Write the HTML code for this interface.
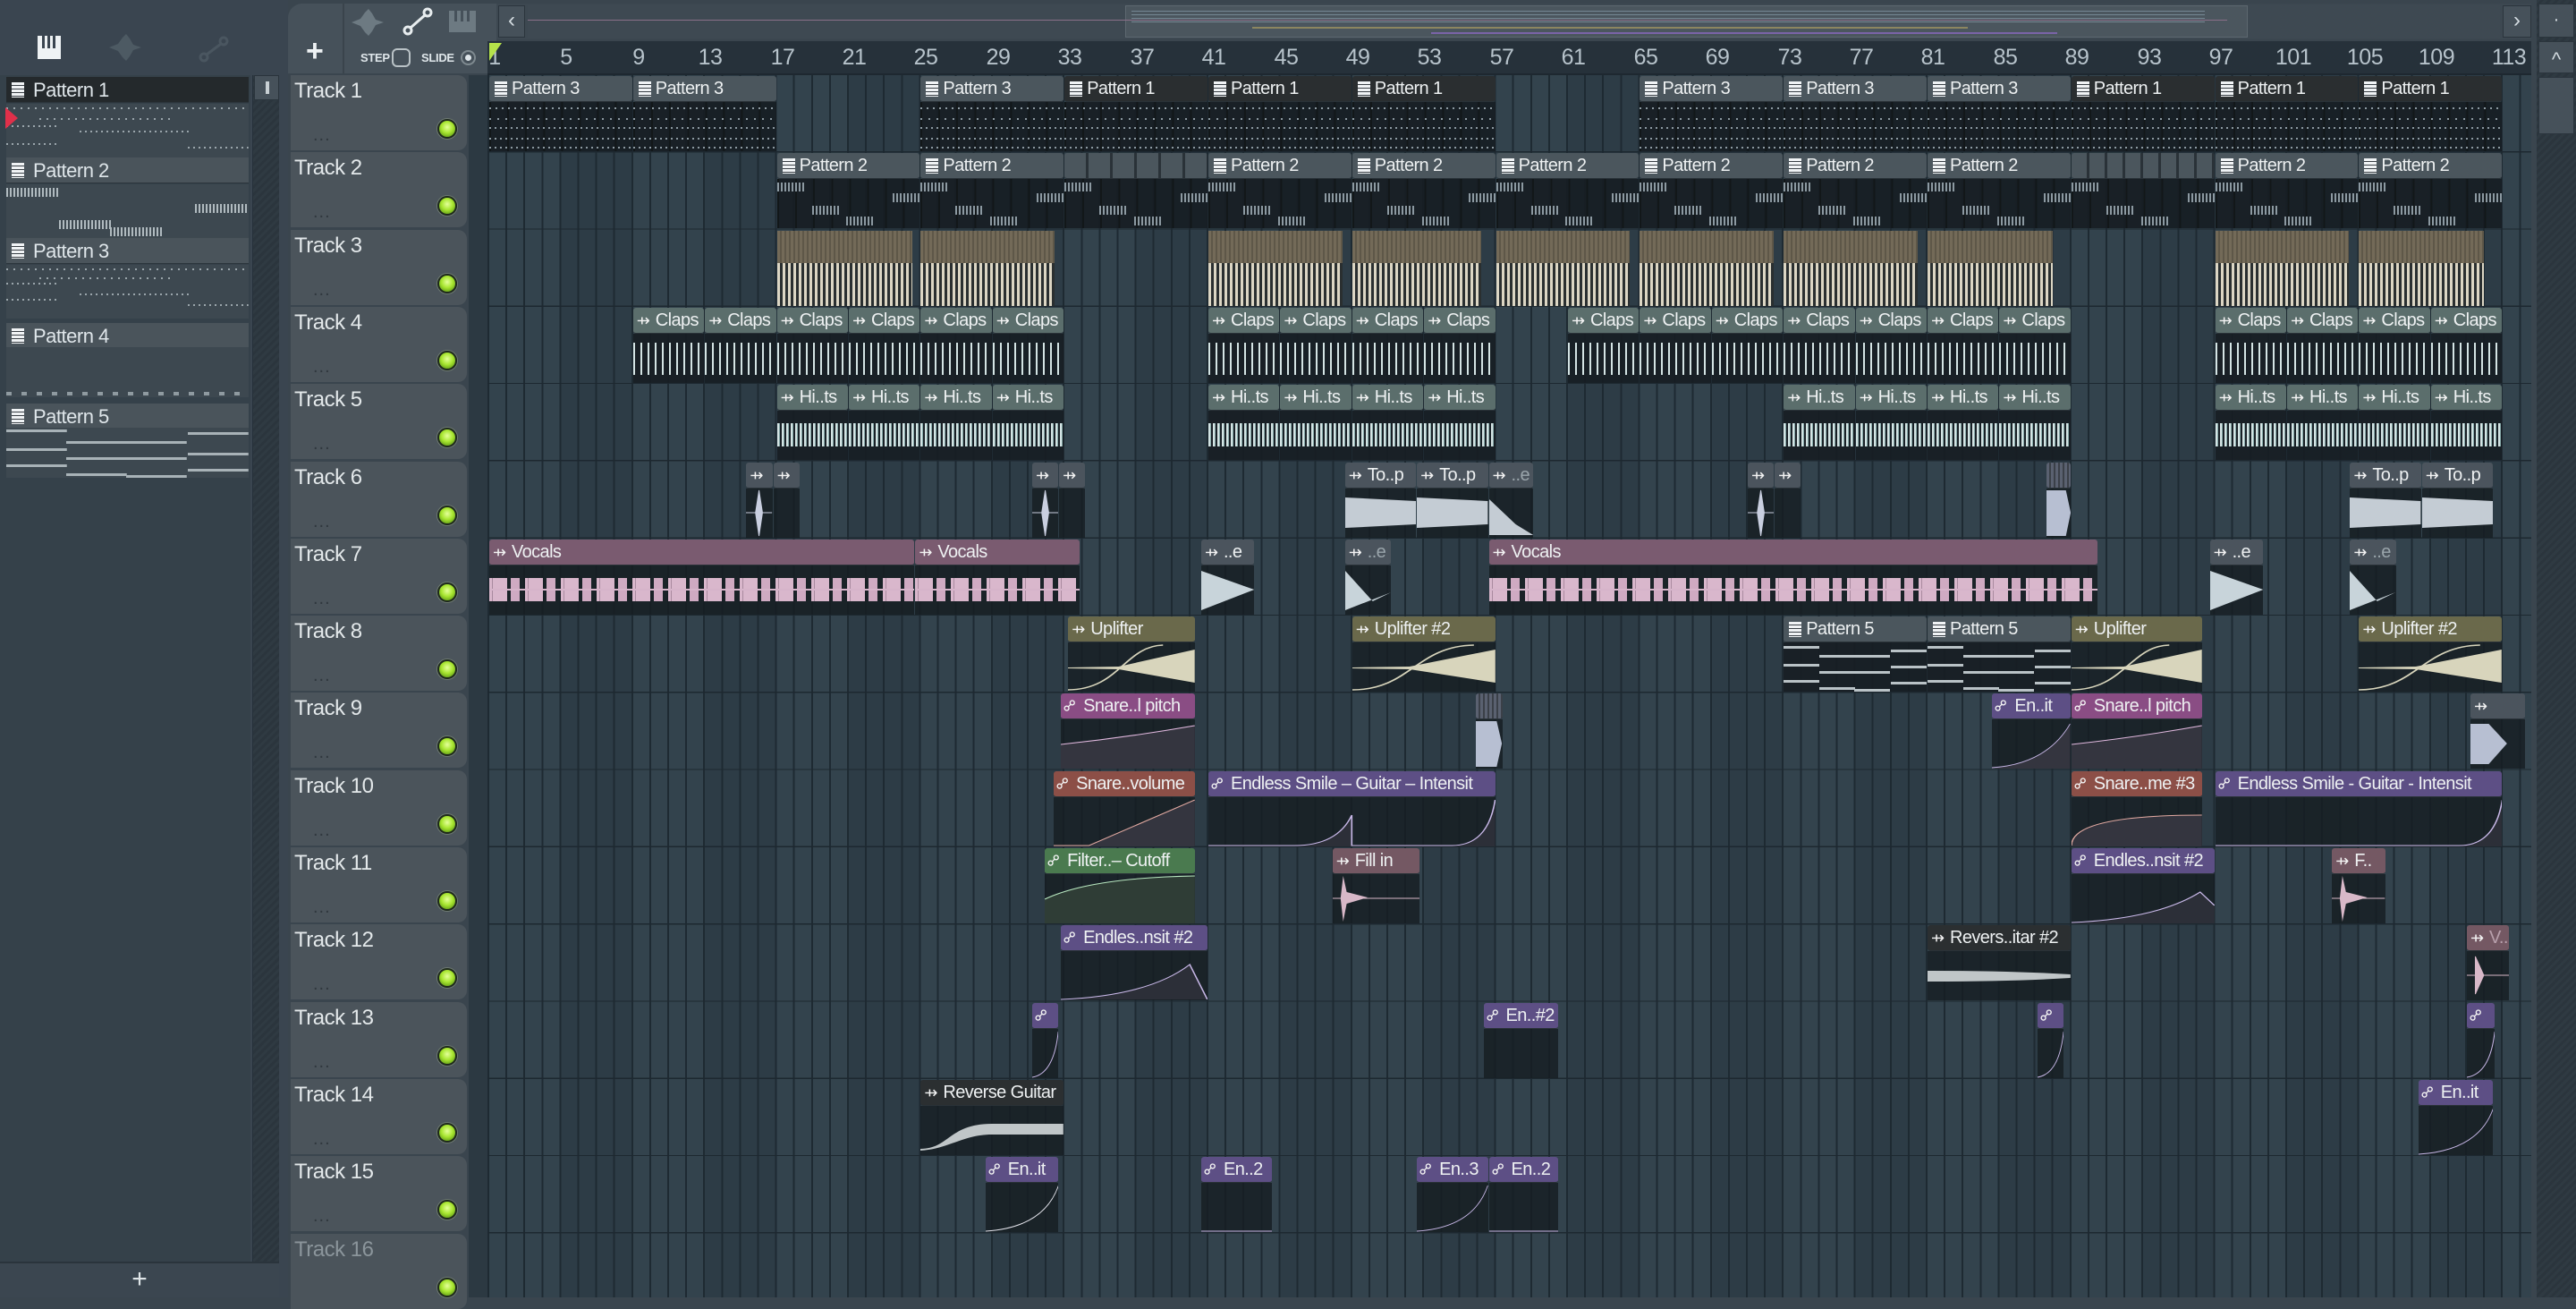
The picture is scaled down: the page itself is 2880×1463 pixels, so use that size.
<!DOCTYPE html>
<html><head><meta charset="utf-8">
<style>
*{box-sizing:border-box;margin:0;padding:0}
body{width:2880px;height:1450px;overflow:hidden;background:#3a454e;font-family:"Liberation Sans Narrow","Liberation Sans",sans-serif;position:relative}
.abs{position:absolute}
#lp{left:0;top:0;width:322px;height:1450px;background:#3a4550}
#lpl{left:0;top:84px;width:280px;height:1326px;background:#35414a}
#lps{left:282px;top:84px;width:30px;height:1326px;background:repeating-linear-gradient(135deg,#2f3a42 0 3px,#2b353d 3px 6px);border-left:1px solid #26313a}
#lpb{left:0;top:1410px;width:312px;height:40px;background:#3b4650;border-top:2px solid #2a343c;color:#dfe5e8;font-size:30px;text-align:center;line-height:36px}
.pt{position:absolute;left:7px;width:271px;height:29px;background:#4a545b;border-bottom:1px solid #2c353c;color:#dfe6ea;font-size:22px;letter-spacing:-0.5px;line-height:29px;padding-left:30px}
.pt.sel{background:#24292c}
.pt::before,.h.pi::before{content:"";position:absolute;left:6px;top:6px;width:14px;height:17px;background:repeating-linear-gradient(180deg,#f0f3f5 0 3px,#3a4046 3px 4px)}
.pp{position:absolute;left:7px;width:271px;height:60px;background:#3d4850}
#th{left:322px;top:84px;width:202px;height:1366px;background:#3a454e}
.tr{position:absolute;left:3px;width:197px;height:84px;background:#4b545b;border-radius:0 10px 10px 0;color:#e3e8ea;font-size:24px;letter-spacing:-0.5px;padding:4px 0 0 4px}
.tr i{position:absolute;left:25px;top:56px;font-style:normal;color:#30383e;font-size:20px;letter-spacing:1px}
.tr b{position:absolute;left:164px;top:49px;width:22px;height:22px;border-radius:50%;background:radial-gradient(circle at 50% 40%,#e4ff9a 0,#a8e630 45%,#6aa51a 80%);border:2px solid #1f2a1c;box-shadow:0 0 0 1px #6e7a72}
#strip{left:524px;top:84px;width:21px;height:1366px;background:#2c3942}
#grid{left:545px;top:84px;width:2285px;height:1366px;
background:
repeating-linear-gradient(180deg,transparent 0 85px,#1d2830 85px 86.3px),
repeating-linear-gradient(90deg,#1e2a32 0 2px,transparent 2px 20.1px),
repeating-linear-gradient(90deg,#33434d 0 80.4px,#2d3c46 80.4px 160.8px)}
#ruler{left:545px;top:46px;width:2285px;height:38px;background:#26313a;border-bottom:2px solid #1e2830}
#ruler span{position:absolute;top:4px;color:#b7c3cb;font-size:25px;letter-spacing:-0.5px;transform:translateX(-50%)}
#tb{left:322px;top:4px;width:233px;height:78px;background:#46515a;border-radius:16px 0 0 0}
#ov{left:555px;top:4px;width:2275px;height:40px;background:#3d4851}
#vs{left:2836px;top:0;width:44px;height:1450px;background:repeating-linear-gradient(135deg,#2f3a42 0 3px,#2b353d 3px 6px)}
.btn{position:absolute;background:#46515a;border:1px solid #2b353d;color:#d5dde2;text-align:center}
.c{position:absolute;left:calc(547px + (var(--a) - 1) * 20.1px);width:calc((var(--b) - var(--a)) * 20.1px - 1px);top:calc(85px + (var(--t) - 1) * 86.3px);height:84px}
.h{position:relative;height:29px;border-radius:3px;color:#eef1f2;font-size:20px;letter-spacing:-0.6px;line-height:29px;white-space:nowrap;overflow:hidden;padding-left:25px;background:#4b565d;border-bottom:1px solid #2a3238}
.h.pi{padding-left:25px}
.h.au::before{content:"⇸";position:absolute;left:4px;top:0;font-family:"DejaVu Sans",sans-serif;font-size:18px;color:#f3f3f3}
.h.at::before{content:"⚯";position:absolute;left:3px;top:0;font-family:"DejaVu Sans",sans-serif;font-size:18px;color:#f3f3f3;transform:rotate(-45deg)}
.h.ni{padding-left:4px}
.bd{position:absolute;top:29px;left:0;right:0;bottom:0;background:rgba(22,29,34,.82);overflow:hidden}
.bd svg{position:absolute;left:0;top:0;width:100%;height:100%}
.p3 .bd{background:
repeating-linear-gradient(90deg,#8c99a1 0 2px,transparent 2px 7px) 0 6px/100% 2px no-repeat,
repeating-linear-gradient(90deg,#8c99a1 0 2px,transparent 2px 9px) 0 18px/100% 2px no-repeat,
repeating-linear-gradient(90deg,#8c99a1 0 2px,transparent 2px 6px) 0 28px/100% 2px no-repeat,
repeating-linear-gradient(90deg,#8c99a1 0 2px,transparent 2px 6px) 0 40px/100% 2px no-repeat,
repeating-linear-gradient(90deg,#8c99a1 0 2px,transparent 2px 6px) 0 50px/100% 2px no-repeat,
repeating-linear-gradient(90deg,#121719 0 2px,transparent 2px 20.1px),rgba(22,29,34,.9)}
.p1 .h{background:#2a2e30}
.p2 .bd{background:
repeating-linear-gradient(90deg,#8c99a1 0 2px,transparent 2px 4px) 0 4px/30px 10px no-repeat,
repeating-linear-gradient(90deg,#8c99a1 0 2px,transparent 2px 4px) 100% 16px/30px 10px no-repeat,
repeating-linear-gradient(90deg,#8c99a1 0 2px,transparent 2px 4px) 30% 30px/30px 10px no-repeat,
repeating-linear-gradient(90deg,#8c99a1 0 2px,transparent 2px 4px) 60% 42px/30px 10px no-repeat,
repeating-linear-gradient(90deg,#121719 0 2px,transparent 2px 20.1px),rgba(22,29,34,.9)}
.kk .top{position:absolute;left:0;right:0;top:0;height:36px;background:repeating-linear-gradient(90deg,#736a58 0 3px,#5e5748 3px 5px)}
.kk .bd{top:36px;background:repeating-linear-gradient(90deg,#dcd6c4 0 3px,#2a2f30 3px 6px)}
.cl .h{background:#5b6e6c}
.cl .bd{background:repeating-linear-gradient(90deg,#d4e4e4 0 2px,transparent 2px 8px) 0 10px/100% 36px no-repeat,rgba(22,29,34,.9)}
.hi .h{background:#5b6e6c}
.hi .bd{background:repeating-linear-gradient(90deg,#d4e4e4 0 2px,#8aa 2px 3px,transparent 3px 5px) 0 14px/100% 26px no-repeat,rgba(22,29,34,.9)}
.sm .h{background:#4b545d}
.vo .h{background:#7a5b70}
.vo .bd{background:linear-gradient(#d6b4ca,#d6b4ca) 0 26px/100% 2px no-repeat,repeating-linear-gradient(90deg,#d9b7cc 0 3px,#a98a9f 3px 4px,#d9b7cc 4px 20px,transparent 20px 24px,#cfaac2 24px 34px,transparent 34px 40px) 0 14px/100% 26px no-repeat,rgba(22,29,34,.85)}
.up .h{background:#6a694b}
.pa .h{background:#8a4d84}
.sv .h{background:#8c4f47}
.en .h{background:#5d4f85}
.fi .h{background:#4a7a4f}
.fl .h{background:#745863}
.dk .h{background:#2b2f31}
.p5 .bd{background:
linear-gradient(#b9c2c6,#b9c2c6) 0 4px/25% 3px no-repeat,linear-gradient(#b9c2c6,#b9c2c6) 0 24px/25% 3px no-repeat,linear-gradient(#b9c2c6,#b9c2c6) 0 42px/25% 3px no-repeat,
linear-gradient(#b9c2c6,#b9c2c6) 33% 14px/25% 3px no-repeat,linear-gradient(#b9c2c6,#b9c2c6) 33% 32px/25% 3px no-repeat,linear-gradient(#b9c2c6,#b9c2c6) 33% 50px/25% 3px no-repeat,
linear-gradient(#b9c2c6,#b9c2c6) 66% 14px/25% 3px no-repeat,linear-gradient(#b9c2c6,#b9c2c6) 66% 32px/25% 3px no-repeat,linear-gradient(#b9c2c6,#b9c2c6) 66% 52px/25% 3px no-repeat,
linear-gradient(#b9c2c6,#b9c2c6) 100% 8px/25% 3px no-repeat,linear-gradient(#b9c2c6,#b9c2c6) 100% 26px/25% 3px no-repeat,linear-gradient(#b9c2c6,#b9c2c6) 100% 44px/25% 3px no-repeat,rgba(22,29,34,.9)}
</style></head><body>

<div id="lp" class="abs"></div>
<div class="abs" style="left:42px;top:40px;width:26px;height:26px;background:#eef2f4"><div style="position:absolute;left:5px;top:0;width:3px;height:14px;background:#3a4550"></div><div style="position:absolute;left:11px;top:0;width:3px;height:14px;background:#3a4550"></div><div style="position:absolute;left:17px;top:0;width:3px;height:14px;background:#3a4550"></div></div>
<svg class="abs" style="left:122px;top:38px" width="44" height="30" viewBox="0 0 44 30"><path d="M0 15 L10 11 L15 4 L19 0 L23 5 L27 12 L36 15 L27 18 L23 25 L19 30 L15 26 L10 19Z" fill="#4d5a63"/></svg>
<svg class="abs" style="left:222px;top:40px" width="34" height="30" viewBox="0 0 34 30"><circle cx="6" cy="24" r="4" fill="none" stroke="#4a5660" stroke-width="3"/><circle cx="28" cy="6" r="4" fill="none" stroke="#4a5660" stroke-width="3"/><path d="M9 21L25 9" stroke="#4a5660" stroke-width="3"/></svg>
<div id="lpl" class="abs"></div>
<div id="lps" class="abs"><div style="position:absolute;left:1px;top:0;width:28px;height:28px;background:#46515a;border:1px solid #2a343c"><div style="position:absolute;left:12px;top:6px;width:4px;height:14px;background:#c8d0d4"></div></div></div>

<div class="pt sel" style="top:86px">Pattern 1</div>
<div class="pp" style="top:116px;background:
repeating-linear-gradient(90deg,#9aa5ab 0 2px,transparent 2px 8px) 0 4px/100% 2px no-repeat,
repeating-linear-gradient(90deg,#9aa5ab 0 2px,transparent 2px 8px) 30% 16px/55% 2px no-repeat,
repeating-linear-gradient(90deg,#9aa5ab 0 2px,transparent 2px 6px) 0 24px/22% 2px no-repeat,
repeating-linear-gradient(90deg,#9aa5ab 0 2px,transparent 2px 6px) 55% 30px/45% 2px no-repeat,
repeating-linear-gradient(90deg,#9aa5ab 0 2px,transparent 2px 6px) 0 44px/22% 2px no-repeat,
repeating-linear-gradient(90deg,#9aa5ab 0 2px,transparent 2px 6px) 100% 48px/25% 2px no-repeat,#3d4850"></div>
<div class="abs" style="left:6px;top:120px;width:0;height:0;border-top:12px solid transparent;border-bottom:12px solid transparent;border-left:14px solid #e0304a"></div>
<div class="pt" style="top:176px">Pattern 2</div>
<div class="pp" style="top:206px;background:
repeating-linear-gradient(90deg,#b0babf 0 2px,transparent 2px 4px) 0 4px/22% 10px no-repeat,
repeating-linear-gradient(90deg,#b0babf 0 2px,transparent 2px 4px) 100% 22px/22% 10px no-repeat,
repeating-linear-gradient(90deg,#b0babf 0 2px,transparent 2px 4px) 28% 40px/22% 10px no-repeat,
repeating-linear-gradient(90deg,#b0babf 0 2px,transparent 2px 4px) 55% 48px/22% 10px no-repeat,#3d4850"></div>
<div class="pt" style="top:266px">Pattern 3</div>
<div class="pp" style="top:296px;background:
repeating-linear-gradient(90deg,#9aa5ab 0 2px,transparent 2px 8px) 0 4px/100% 2px no-repeat,
repeating-linear-gradient(90deg,#9aa5ab 0 2px,transparent 2px 8px) 30% 14px/55% 2px no-repeat,
repeating-linear-gradient(90deg,#9aa5ab 0 2px,transparent 2px 6px) 0 20px/22% 2px no-repeat,
repeating-linear-gradient(90deg,#9aa5ab 0 2px,transparent 2px 6px) 55% 32px/45% 2px no-repeat,
repeating-linear-gradient(90deg,#9aa5ab 0 2px,transparent 2px 6px) 0 38px/22% 2px no-repeat,
repeating-linear-gradient(90deg,#9aa5ab 0 2px,transparent 2px 6px) 100% 44px/25% 2px no-repeat,#3d4850"></div>
<div class="pt" style="top:361px">Pattern 4</div>
<div class="pp" style="top:388px;height:56px;background:repeating-linear-gradient(90deg,#8f9aa0 0 6px,transparent 6px 17px) 0 50px/100% 4px no-repeat,#3d4850"></div>
<div class="pt" style="top:451px">Pattern 5</div>
<div class="pp" style="top:478px;height:56px;background:
linear-gradient(#a8b2b7,#a8b2b7) 0 2px/25% 3px no-repeat,linear-gradient(#a8b2b7,#a8b2b7) 0 23px/25% 3px no-repeat,linear-gradient(#a8b2b7,#a8b2b7) 0 41px/25% 3px no-repeat,
linear-gradient(#a8b2b7,#a8b2b7) 33% 15px/25% 3px no-repeat,linear-gradient(#a8b2b7,#a8b2b7) 33% 33px/25% 3px no-repeat,linear-gradient(#a8b2b7,#a8b2b7) 33% 51px/25% 3px no-repeat,
linear-gradient(#a8b2b7,#a8b2b7) 66% 15px/25% 3px no-repeat,linear-gradient(#a8b2b7,#a8b2b7) 66% 33px/25% 3px no-repeat,linear-gradient(#a8b2b7,#a8b2b7) 66% 53px/25% 3px no-repeat,
linear-gradient(#a8b2b7,#a8b2b7) 100% 5px/25% 3px no-repeat,linear-gradient(#a8b2b7,#a8b2b7) 100% 28px/25% 3px no-repeat,linear-gradient(#a8b2b7,#a8b2b7) 100% 46px/25% 3px no-repeat,#3d4850"></div>
<div id="lpb" class="abs">+</div>

<!-- toolbar -->
<div id="tb" class="abs"></div>
<div class="abs" style="left:342px;top:38px;color:#eef2f4;font-size:34px;font-family:'Liberation Sans',sans-serif;font-weight:bold">+</div>
<div class="abs" style="left:383px;top:4px;width:2px;height:78px;background:#3a444c"></div>
<svg class="abs" style="left:393px;top:10px" width="44" height="30" viewBox="0 0 44 30"><path d="M0 15 L10 11 L15 4 L19 0 L23 5 L27 12 L36 15 L27 18 L23 25 L19 30 L15 26 L10 19Z" fill="#6d7a82"/></svg>
<svg class="abs" style="left:450px;top:8px" width="34" height="32" viewBox="0 0 34 32"><circle cx="6" cy="26" r="4" fill="none" stroke="#e8edef" stroke-width="3"/><circle cx="28" cy="6" r="4" fill="none" stroke="#e8edef" stroke-width="3"/><path d="M9 23L25 9" stroke="#e8edef" stroke-width="3"/></svg>
<div class="abs" style="left:502px;top:12px;width:30px;height:24px;background:#6d7a82"><div style="position:absolute;left:6px;top:0;width:3px;height:12px;background:#46515a"></div><div style="position:absolute;left:13px;top:0;width:3px;height:12px;background:#46515a"></div><div style="position:absolute;left:20px;top:0;width:3px;height:12px;background:#46515a"></div></div>
<div class="abs" style="left:403px;top:57px;color:#dfe6ea;font-size:13px;font-weight:bold;letter-spacing:-0.3px">STEP</div>
<div class="abs" style="left:438px;top:54px;width:21px;height:21px;border:2px solid #b9c2c6;border-radius:6px"></div>
<div class="abs" style="left:471px;top:57px;color:#dfe6ea;font-size:13px;font-weight:bold;letter-spacing:-0.3px">SLIDE</div>
<div class="abs" style="left:515px;top:56px;width:17px;height:17px;border:2px solid #7f8a90;border-radius:50%"><div style="position:absolute;left:3px;top:3px;width:7px;height:7px;border-radius:50%;background:#dfe6ea"></div></div>

<!-- overview -->
<div id="ov" class="abs"></div>
<div class="btn" style="left:557px;top:6px;width:30px;height:36px;font-size:24px;line-height:32px">‹</div>
<div class="abs" style="left:590px;top:6px;width:2205px;height:36px;background:#3e4952"></div>
<div class="abs" style="left:1258px;top:6px;width:1255px;height:36px;background:#4b565e;border:1px solid #5d6870"></div>
<div class="abs" style="left:590px;top:22px;width:1900px;height:1px;background:#8a6f88"></div>
<div class="abs" style="left:1265px;top:12px;width:1200px;height:14px;background:repeating-linear-gradient(180deg,#7f93a0 0 1px,transparent 1px 4px);opacity:.8"></div>
<div class="abs" style="left:1400px;top:30px;width:800px;height:2px;background:#8c8660"></div>
<div class="abs" style="left:1600px;top:36px;width:700px;height:2px;background:#7a64a8"></div>
<div class="btn" style="left:2798px;top:6px;width:32px;height:36px;font-size:24px;line-height:32px">›</div>

<!-- ruler -->
<div id="ruler" class="abs">
<span style="left:8px">1</span><span style="left:88px">5</span><span style="left:169px">9</span><span style="left:249px">13</span><span style="left:330px">17</span><span style="left:410px">21</span><span style="left:490px">25</span><span style="left:571px">29</span><span style="left:651px">33</span><span style="left:732px">37</span><span style="left:812px">41</span><span style="left:893px">45</span><span style="left:973px">49</span><span style="left:1053px">53</span><span style="left:1134px">57</span><span style="left:1214px">61</span><span style="left:1295px">65</span><span style="left:1375px">69</span><span style="left:1456px">73</span><span style="left:1536px">77</span><span style="left:1616px">81</span><span style="left:1697px">85</span><span style="left:1777px">89</span><span style="left:1858px">93</span><span style="left:1938px">97</span><span style="left:2019px">101</span><span style="left:2099px">105</span><span style="left:2179px">109</span><span style="left:2260px">113</span>
</div>
<div class="abs" style="left:547px;top:48px;width:0;height:0;border-left:14px solid #b6e34a;border-bottom:20px solid transparent"></div>

<!-- right scroll -->
<div id="vs" class="abs"></div>
<div class="btn" style="left:2838px;top:4px;width:40px;height:38px;font-size:20px;line-height:34px">·</div>
<div class="btn" style="left:2838px;top:46px;width:40px;height:36px;font-size:22px;line-height:40px">^</div>
<div class="btn" style="left:2838px;top:86px;width:40px;height:64px"></div>

<!-- track headers -->
<div id="th" class="abs">
<div class="tr" style="top:0">Track 1<i>...</i><b></b></div>
<div class="tr" style="top:86.3px">Track 2<i>...</i><b></b></div>
<div class="tr" style="top:172.6px">Track 3<i>...</i><b></b></div>
<div class="tr" style="top:258.9px">Track 4<i>...</i><b></b></div>
<div class="tr" style="top:345.2px">Track 5<i>...</i><b></b></div>
<div class="tr" style="top:431.5px">Track 6<i>...</i><b></b></div>
<div class="tr" style="top:517.8px">Track 7<i>...</i><b></b></div>
<div class="tr" style="top:604.1px">Track 8<i>...</i><b></b></div>
<div class="tr" style="top:690.4px">Track 9<i>...</i><b></b></div>
<div class="tr" style="top:776.7px">Track 10<i>...</i><b></b></div>
<div class="tr" style="top:863px">Track 11<i>...</i><b></b></div>
<div class="tr" style="top:949.3px">Track 12<i>...</i><b></b></div>
<div class="tr" style="top:1035.6px">Track 13<i>...</i><b></b></div>
<div class="tr" style="top:1121.9px">Track 14<i>...</i><b></b></div>
<div class="tr" style="top:1208.2px">Track 15<i>...</i><b></b></div>
<div class="tr" style="top:1294.5px;color:#8b959b">Track 16<b></b></div>
</div>
<div id="strip" class="abs"></div>
<div id="grid" class="abs"></div>

<!-- Track 1 -->
<div class="c p3" style="--t:1;--a:1;--b:9"><div class="h pi">Pattern 3</div><div class="bd"></div></div>
<div class="c p3" style="--t:1;--a:9;--b:17"><div class="h pi">Pattern 3</div><div class="bd"></div></div>
<div class="c p3" style="--t:1;--a:25;--b:33"><div class="h pi">Pattern 3</div><div class="bd"></div></div>
<div class="c p3 p1" style="--t:1;--a:33;--b:41"><div class="h pi">Pattern 1</div><div class="bd"></div></div>
<div class="c p3 p1" style="--t:1;--a:41;--b:49"><div class="h pi">Pattern 1</div><div class="bd"></div></div>
<div class="c p3 p1" style="--t:1;--a:49;--b:57"><div class="h pi">Pattern 1</div><div class="bd"></div></div>
<div class="c p3" style="--t:1;--a:65;--b:73"><div class="h pi">Pattern 3</div><div class="bd"></div></div>
<div class="c p3" style="--t:1;--a:73;--b:81"><div class="h pi">Pattern 3</div><div class="bd"></div></div>
<div class="c p3" style="--t:1;--a:81;--b:89"><div class="h pi">Pattern 3</div><div class="bd"></div></div>
<div class="c p3 p1" style="--t:1;--a:89;--b:97"><div class="h pi">Pattern 1</div><div class="bd"></div></div>
<div class="c p3 p1" style="--t:1;--a:97;--b:105"><div class="h pi">Pattern 1</div><div class="bd"></div></div>
<div class="c p3 p1" style="--t:1;--a:105;--b:113"><div class="h pi">Pattern 1</div><div class="bd"></div></div>

<!-- Track 2 -->
<div class="c p2" style="--t:2;--a:17;--b:25"><div class="h pi">Pattern 2</div><div class="bd"></div></div>
<div class="c p2" style="--t:2;--a:25;--b:33"><div class="h pi">Pattern 2</div><div class="bd"></div></div>
<div class="c p2" style="--t:2;--a:33;--b:41"><div class="h" style="padding:0;background:repeating-linear-gradient(90deg,#4b565d 0 24px,#2a3238 24px 27px)"></div><div class="bd"></div></div>
<div class="c p2" style="--t:2;--a:41;--b:49"><div class="h pi">Pattern 2</div><div class="bd"></div></div>
<div class="c p2" style="--t:2;--a:49;--b:57"><div class="h pi">Pattern 2</div><div class="bd"></div></div>
<div class="c p2" style="--t:2;--a:57;--b:65"><div class="h pi">Pattern 2</div><div class="bd"></div></div>
<div class="c p2" style="--t:2;--a:65;--b:73"><div class="h pi">Pattern 2</div><div class="bd"></div></div>
<div class="c p2" style="--t:2;--a:73;--b:81"><div class="h pi">Pattern 2</div><div class="bd"></div></div>
<div class="c p2" style="--t:2;--a:81;--b:89"><div class="h pi">Pattern 2</div><div class="bd"></div></div>
<div class="c p2" style="--t:2;--a:89;--b:97"><div class="h" style="padding:0;background:repeating-linear-gradient(90deg,#4b565d 0 17px,#2a3238 17px 20px)"></div><div class="bd"></div></div>
<div class="c p2" style="--t:2;--a:97;--b:105"><div class="h pi">Pattern 2</div><div class="bd"></div></div>
<div class="c p2" style="--t:2;--a:105;--b:113"><div class="h pi">Pattern 2</div><div class="bd"></div></div>

<!-- Track 3 -->
<div class="c kk" style="--t:3;--a:17;--b:24.6"><div class="top"></div><div class="bd"></div></div>
<div class="c kk" style="--t:3;--a:25;--b:32.5"><div class="top"></div><div class="bd"></div></div>
<div class="c kk" style="--t:3;--a:41;--b:48.5"><div class="top"></div><div class="bd"></div></div>
<div class="c kk" style="--t:3;--a:49;--b:56.2"><div class="top"></div><div class="bd"></div></div>
<div class="c kk" style="--t:3;--a:57;--b:64.5"><div class="top"></div><div class="bd"></div></div>
<div class="c kk" style="--t:3;--a:65;--b:72.5"><div class="top"></div><div class="bd"></div></div>
<div class="c kk" style="--t:3;--a:73;--b:80.5"><div class="top"></div><div class="bd"></div></div>
<div class="c kk" style="--t:3;--a:81;--b:88"><div class="top"></div><div class="bd"></div></div>
<div class="c kk" style="--t:3;--a:97;--b:104.5"><div class="top"></div><div class="bd"></div></div>
<div class="c kk" style="--t:3;--a:105;--b:112"><div class="top"></div><div class="bd"></div></div>

<!-- Track 4 -->
<div class="c cl" style="--t:4;--a:9;--b:13"><div class="h au">Claps</div><div class="bd"></div></div>
<div class="c cl" style="--t:4;--a:13;--b:17"><div class="h au">Claps</div><div class="bd"></div></div>
<div class="c cl" style="--t:4;--a:17;--b:21"><div class="h au">Claps</div><div class="bd"></div></div>
<div class="c cl" style="--t:4;--a:21;--b:25"><div class="h au">Claps</div><div class="bd"></div></div>
<div class="c cl" style="--t:4;--a:25;--b:29"><div class="h au">Claps</div><div class="bd"></div></div>
<div class="c cl" style="--t:4;--a:29;--b:33"><div class="h au">Claps</div><div class="bd"></div></div>
<div class="c cl" style="--t:4;--a:41;--b:45"><div class="h au">Claps</div><div class="bd"></div></div>
<div class="c cl" style="--t:4;--a:45;--b:49"><div class="h au">Claps</div><div class="bd"></div></div>
<div class="c cl" style="--t:4;--a:49;--b:53"><div class="h au">Claps</div><div class="bd"></div></div>
<div class="c cl" style="--t:4;--a:53;--b:57"><div class="h au">Claps</div><div class="bd"></div></div>
<div class="c cl" style="--t:4;--a:61;--b:65"><div class="h au">Claps</div><div class="bd"></div></div>
<div class="c cl" style="--t:4;--a:65;--b:69"><div class="h au">Claps</div><div class="bd"></div></div>
<div class="c cl" style="--t:4;--a:69;--b:73"><div class="h au">Claps</div><div class="bd"></div></div>
<div class="c cl" style="--t:4;--a:73;--b:77"><div class="h au">Claps</div><div class="bd"></div></div>
<div class="c cl" style="--t:4;--a:77;--b:81"><div class="h au">Claps</div><div class="bd"></div></div>
<div class="c cl" style="--t:4;--a:81;--b:85"><div class="h au">Claps</div><div class="bd"></div></div>
<div class="c cl" style="--t:4;--a:85;--b:89"><div class="h au">Claps</div><div class="bd"></div></div>
<div class="c cl" style="--t:4;--a:97;--b:101"><div class="h au">Claps</div><div class="bd"></div></div>
<div class="c cl" style="--t:4;--a:101;--b:105"><div class="h au">Claps</div><div class="bd"></div></div>
<div class="c cl" style="--t:4;--a:105;--b:109"><div class="h au">Claps</div><div class="bd"></div></div>
<div class="c cl" style="--t:4;--a:109;--b:113"><div class="h au">Claps</div><div class="bd"></div></div>

<!-- Track 5 -->
<div class="c hi" style="--t:5;--a:17;--b:21"><div class="h au">Hi..ts</div><div class="bd"></div></div>
<div class="c hi" style="--t:5;--a:21;--b:25"><div class="h au">Hi..ts</div><div class="bd"></div></div>
<div class="c hi" style="--t:5;--a:25;--b:29"><div class="h au">Hi..ts</div><div class="bd"></div></div>
<div class="c hi" style="--t:5;--a:29;--b:33"><div class="h au">Hi..ts</div><div class="bd"></div></div>
<div class="c hi" style="--t:5;--a:41;--b:45"><div class="h au">Hi..ts</div><div class="bd"></div></div>
<div class="c hi" style="--t:5;--a:45;--b:49"><div class="h au">Hi..ts</div><div class="bd"></div></div>
<div class="c hi" style="--t:5;--a:49;--b:53"><div class="h au">Hi..ts</div><div class="bd"></div></div>
<div class="c hi" style="--t:5;--a:53;--b:57"><div class="h au">Hi..ts</div><div class="bd"></div></div>
<div class="c hi" style="--t:5;--a:73;--b:77"><div class="h au">Hi..ts</div><div class="bd"></div></div>
<div class="c hi" style="--t:5;--a:77;--b:81"><div class="h au">Hi..ts</div><div class="bd"></div></div>
<div class="c hi" style="--t:5;--a:81;--b:85"><div class="h au">Hi..ts</div><div class="bd"></div></div>
<div class="c hi" style="--t:5;--a:85;--b:89"><div class="h au">Hi..ts</div><div class="bd"></div></div>
<div class="c hi" style="--t:5;--a:97;--b:101"><div class="h au">Hi..ts</div><div class="bd"></div></div>
<div class="c hi" style="--t:5;--a:101;--b:105"><div class="h au">Hi..ts</div><div class="bd"></div></div>
<div class="c hi" style="--t:5;--a:105;--b:109"><div class="h au">Hi..ts</div><div class="bd"></div></div>
<div class="c hi" style="--t:5;--a:109;--b:113"><div class="h au">Hi..ts</div><div class="bd"></div></div>

<!-- Track 6 -->
<div class="c sm" style="--t:6;--a:15.3;--b:16.8"><div class="h au"></div><div class="bd"><svg viewBox="0 0 30 55" preserveAspectRatio="none"><path d="M0 27H30M15 2L19 27L15 53L11 27Z" stroke="#c9cfe0" fill="#c9cfe0"/></svg></div></div>
<div class="c sm" style="--t:6;--a:16.8;--b:18.3"><div class="h au"></div><div class="bd"></div></div>
<div class="c sm" style="--t:6;--a:31.2;--b:32.7"><div class="h au"></div><div class="bd"><svg viewBox="0 0 30 55" preserveAspectRatio="none"><path d="M0 27H30M15 2L19 27L15 53L11 27Z" stroke="#c9cfe0" fill="#c9cfe0"/></svg></div></div>
<div class="c sm" style="--t:6;--a:32.7;--b:34.2"><div class="h au"></div><div class="bd"></div></div>
<div class="c sm" style="--t:6;--a:48.6;--b:52.6"><div class="h au">To..p</div><div class="bd"><svg viewBox="0 0 80 55" preserveAspectRatio="none"><path d="M0 27L0 10L80 14L80 40L0 44Z" fill="#c4ccd4"/></svg></div></div>
<div class="c sm" style="--t:6;--a:52.6;--b:56.6"><div class="h au">To..p</div><div class="bd"><svg viewBox="0 0 80 55" preserveAspectRatio="none"><path d="M0 10L80 14L80 40L0 44Z" fill="#c4ccd4"/></svg></div></div>
<div class="c sm" style="--t:6;--a:56.6;--b:59.1"><div class="h au" style="color:#9aa5ab">..e</div><div class="bd"><svg viewBox="0 0 50 55" preserveAspectRatio="none"><path d="M0 12L30 40L50 52L0 52Z" fill="#c4ccd4"/></svg></div></div>
<div class="c sm" style="--t:6;--a:71;--b:72.5"><div class="h au"></div><div class="bd"><svg viewBox="0 0 30 55" preserveAspectRatio="none"><path d="M0 27H30M15 2L19 27L15 53L11 27Z" stroke="#c9cfe0" fill="#c9cfe0"/></svg></div></div>
<div class="c sm" style="--t:6;--a:72.5;--b:74"><div class="h au"></div><div class="bd"></div></div>
<div class="c sm" style="--t:6;--a:87.6;--b:89"><div class="h ni" style="background:repeating-linear-gradient(90deg,#5a6170 0 3px,#3b4048 3px 5px)"></div><div class="bd"><svg viewBox="0 0 30 55" preserveAspectRatio="none"><path d="M0 2H24L30 27L24 53H0Z" fill="#b7bfd2"/></svg></div></div>
<div class="c sm" style="--t:6;--a:104.5;--b:108.5"><div class="h au">To..p</div><div class="bd"><svg viewBox="0 0 80 55" preserveAspectRatio="none"><path d="M0 10L80 14L80 40L0 44Z" fill="#c4ccd4"/></svg></div></div>
<div class="c sm" style="--t:6;--a:108.5;--b:112.5"><div class="h au">To..p</div><div class="bd"><svg viewBox="0 0 80 55" preserveAspectRatio="none"><path d="M0 10L80 14L80 40L0 44Z" fill="#c4ccd4"/></svg></div></div>

<!-- Track 7 -->
<div class="c vo" style="--t:7;--a:1;--b:24.7"><div class="h au">Vocals</div><div class="bd"></div></div>
<div class="c vo" style="--t:7;--a:24.7;--b:33.9"><div class="h au">Vocals</div><div class="bd"></div></div>
<div class="c sm" style="--t:7;--a:40.6;--b:43.6"><div class="h au">..e</div><div class="bd"><svg viewBox="0 0 60 55" preserveAspectRatio="none"><path d="M0 6L60 27L0 50Z" fill="#c8d4da"/></svg></div></div>
<div class="c sm" style="--t:7;--a:48.6;--b:51.2"><div class="h au" style="color:#9aa5ab">..e</div><div class="bd"><svg viewBox="0 0 50 55" preserveAspectRatio="none"><path d="M0 6L30 40L50 30L0 50Z" fill="#c8d4da"/></svg></div></div>
<div class="c vo" style="--t:7;--a:56.6;--b:90.5"><div class="h au">Vocals</div><div class="bd"></div></div>
<div class="c sm" style="--t:7;--a:96.7;--b:99.7"><div class="h au">..e</div><div class="bd"><svg viewBox="0 0 60 55" preserveAspectRatio="none"><path d="M0 6L60 27L0 50Z" fill="#c8d4da"/></svg></div></div>
<div class="c sm" style="--t:7;--a:104.5;--b:107.1"><div class="h au" style="color:#9aa5ab">..e</div><div class="bd"><svg viewBox="0 0 50 55" preserveAspectRatio="none"><path d="M0 6L30 40L50 30L0 50Z" fill="#c8d4da"/></svg></div></div>

<!-- Track 8 -->
<div class="c up" style="--t:8;--a:33.2;--b:40.3"><div class="h au">Uplifter</div><div class="bd"><svg viewBox="0 0 100 55" preserveAspectRatio="none"><path d="M0 28L40 27L100 8L100 45L40 30L0 29Z" fill="#d8d5bc"/><path d="M0 53C40 53 45 4 75 3" stroke="#d8d5bc" stroke-width="1.5" fill="none"/></svg></div></div>
<div class="c up" style="--t:8;--a:49;--b:57"><div class="h au">Uplifter #2</div><div class="bd"><svg viewBox="0 0 100 55" preserveAspectRatio="none"><path d="M0 28L40 27L100 8L100 45L40 30L0 29Z" fill="#d8d5bc"/><path d="M0 53C40 53 45 4 85 3" stroke="#d8d5bc" stroke-width="1.5" fill="none"/></svg></div></div>
<div class="c p5" style="--t:8;--a:73;--b:81"><div class="h pi">Pattern 5</div><div class="bd"></div></div>
<div class="c p5" style="--t:8;--a:81;--b:89"><div class="h pi">Pattern 5</div><div class="bd"></div></div>
<div class="c up" style="--t:8;--a:89;--b:96.3"><div class="h au">Uplifter</div><div class="bd"><svg viewBox="0 0 100 55" preserveAspectRatio="none"><path d="M0 28L40 27L100 8L100 45L40 30L0 29Z" fill="#d8d5bc"/><path d="M0 53C40 53 45 4 75 3" stroke="#d8d5bc" stroke-width="1.5" fill="none"/></svg></div></div>
<div class="c up" style="--t:8;--a:105;--b:113"><div class="h au">Uplifter #2</div><div class="bd"><svg viewBox="0 0 100 55" preserveAspectRatio="none"><path d="M0 28L40 27L100 8L100 45L40 30L0 29Z" fill="#d8d5bc"/><path d="M0 53C40 53 45 4 85 3" stroke="#d8d5bc" stroke-width="1.5" fill="none"/></svg></div></div>

<!-- Track 9 -->
<div class="c pa" style="--t:9;--a:32.8;--b:40.3"><div class="h at">Snare..l pitch</div><div class="bd"><svg viewBox="0 0 100 55" preserveAspectRatio="none"><path d="M0 28Q50 20 100 7V55H0Z" fill="#34353f"/><path d="M0 28Q50 20 100 7" stroke="#e0b8de" stroke-width="1" fill="none"/></svg></div></div>
<div class="c sm" style="--t:9;--a:55.9;--b:57.4"><div class="h ni" style="background:repeating-linear-gradient(90deg,#5a6170 0 3px,#3b4048 3px 5px)"></div><div class="bd"><svg viewBox="0 0 30 55" preserveAspectRatio="none"><path d="M0 2H24L30 27L24 53H0Z" fill="#b7bfd2"/></svg></div></div>
<div class="c en" style="--t:9;--a:84.6;--b:89"><div class="h at">En..it</div><div class="bd"><svg viewBox="0 0 100 55" preserveAspectRatio="none"><path d="M0 54Q70 50 100 5V55H0Z" fill="#34353f"/><path d="M0 54Q70 50 100 5" stroke="#c8b8e8" fill="none"/></svg></div></div>
<div class="c pa" style="--t:9;--a:89;--b:96.3"><div class="h at">Snare..l pitch</div><div class="bd"><svg viewBox="0 0 100 55" preserveAspectRatio="none"><path d="M0 28Q50 20 100 7V55H0Z" fill="#34353f"/><path d="M0 28Q50 20 100 7" stroke="#e0b8de" stroke-width="1" fill="none"/></svg></div></div>
<div class="c sm" style="--t:9;--a:111.2;--b:114.3"><div class="h au"></div><div class="bd"><svg viewBox="0 0 60 55" preserveAspectRatio="none"><path d="M0 5H20L40 27L20 50H0Z" fill="#b7bfd2"/></svg></div></div>

<!-- Track 10 -->
<div class="c sv" style="--t:10;--a:32.4;--b:40.3"><div class="h at">Snare..volume</div><div class="bd"><svg viewBox="0 0 100 55" preserveAspectRatio="none"><path d="M0 54H25L100 3V55H0Z" fill="#34353f"/><path d="M0 54H25L100 3" stroke="#e0a8a0" fill="none"/></svg></div></div>
<div class="c en" style="--t:10;--a:41;--b:57"><div class="h at">Endless Smile – Guitar – Intensit</div><div class="bd"><svg viewBox="0 0 200 55" preserveAspectRatio="none"><path d="M0 54H60Q90 54 100 20V54H170Q195 54 200 3V55H0Z" fill="#2c2f38"/><path d="M0 54H60Q90 54 100 20V54H170Q195 54 200 3" stroke="#c8b8e8" fill="none"/></svg></div></div>
<div class="c sv" style="--t:10;--a:89;--b:96.3"><div class="h at">Snare..me #3</div><div class="bd"><svg viewBox="0 0 100 55" preserveAspectRatio="none"><path d="M0 54Q0 20 100 20V55H0Z" fill="#34353f"/><path d="M0 54Q0 20 100 20" stroke="#e0a8a0" fill="none"/></svg></div></div>
<div class="c en" style="--t:10;--a:97;--b:113"><div class="h at">Endless Smile - Guitar - Intensit</div><div class="bd"><svg viewBox="0 0 200 55" preserveAspectRatio="none"><path d="M0 54H170Q195 54 200 3V55H0Z" fill="#2c2f38"/><path d="M0 54H170Q195 54 200 3" stroke="#c8b8e8" fill="none"/></svg></div></div>

<!-- Track 11 -->
<div class="c fi" style="--t:11;--a:31.9;--b:40.3"><div class="h at">Filter..– Cutoff</div><div class="bd"><svg viewBox="0 0 100 55" preserveAspectRatio="none"><path d="M0 28Q30 4 100 2V55H0Z" fill="#2f3d36"/><path d="M0 28Q30 4 100 2" stroke="#b8e8c0" fill="none"/></svg></div></div>
<div class="c fl" style="--t:11;--a:47.9;--b:52.8"><div class="h au">Fill in</div><div class="bd"><svg viewBox="0 0 100 55" preserveAspectRatio="none"><path d="M0 27H100" stroke="#d8b8c8"/><path d="M12 2L16 20L40 26L16 33L12 53L9 27Z" fill="#d8b8c8"/></svg></div></div>
<div class="c en" style="--t:11;--a:89;--b:97"><div class="h at">Endles..nsit #2</div><div class="bd"><svg viewBox="0 0 100 55" preserveAspectRatio="none"><path d="M0 54Q60 50 90 20L100 35V55H0Z" fill="#2c2f38"/><path d="M0 54Q60 50 90 20L100 35" stroke="#c8b8e8" fill="none"/></svg></div></div>
<div class="c fl" style="--t:11;--a:103.5;--b:106.5"><div class="h au">F..</div><div class="bd"><svg viewBox="0 0 60 55" preserveAspectRatio="none"><path d="M0 27H60" stroke="#d8b8c8"/><path d="M12 2L16 20L40 26L16 33L12 53L9 27Z" fill="#d8b8c8"/></svg></div></div>

<!-- Track 12 -->
<div class="c en" style="--t:12;--a:32.8;--b:41"><div class="h at">Endles..nsit #2</div><div class="bd"><svg viewBox="0 0 100 55" preserveAspectRatio="none"><path d="M0 54Q60 50 88 15L100 54H0Z" fill="#2c2f38"/><path d="M0 54Q60 50 88 15L100 54" stroke="#c8b8e8" fill="none"/></svg></div></div>
<div class="c dk" style="--t:12;--a:81;--b:89"><div class="h au">Revers..itar #2</div><div class="bd"><svg viewBox="0 0 100 55" preserveAspectRatio="none"><path d="M0 22Q60 22 100 26V30Q60 34 0 34Z" fill="#c0c6c8"/><path d="M0 28H100" stroke="#c0c6c8"/></svg></div></div>
<div class="c fl" style="--t:12;--a:111;--b:113.4"><div class="h au" style="color:#b8a0ac">V..</div><div class="bd"><svg viewBox="0 0 50 55" preserveAspectRatio="none"><path d="M0 27H50M10 6L20 27L10 48Z" stroke="#d8b8c8" fill="#d8b8c8"/></svg></div></div>

<!-- Track 13 -->
<div class="c en" style="--t:13;--a:31.2;--b:32.7"><div class="h at"></div><div class="bd"><svg viewBox="0 0 30 55" preserveAspectRatio="none"><path d="M0 54Q25 50 30 3" stroke="#c8b8e8" fill="none"/></svg></div></div>
<div class="c en" style="--t:13;--a:56.3;--b:60.5"><div class="h at">En..#2</div><div class="bd"></div></div>
<div class="c en" style="--t:13;--a:87.1;--b:88.6"><div class="h at"></div><div class="bd"><svg viewBox="0 0 30 55" preserveAspectRatio="none"><path d="M0 54Q25 50 30 3" stroke="#c8b8e8" fill="none"/></svg></div></div>
<div class="c en" style="--t:13;--a:111;--b:112.6"><div class="h at"></div><div class="bd"><svg viewBox="0 0 30 55" preserveAspectRatio="none"><path d="M0 54Q25 50 30 3" stroke="#c8b8e8" fill="none"/></svg></div></div>

<!-- Track 14 -->
<div class="c dk" style="--t:14;--a:25;--b:33"><div class="h au">Reverse Guitar</div><div class="bd"><svg viewBox="0 0 100 55" preserveAspectRatio="none"><path d="M0 48C20 48 20 20 50 20H100V32H50C30 32 20 48 0 50Z" fill="#c0c6c8"/></svg></div></div>
<div class="c en" style="--t:14;--a:108.3;--b:112.5"><div class="h at">En..it</div><div class="bd"><svg viewBox="0 0 100 55" preserveAspectRatio="none"><path d="M0 54Q80 50 100 3" stroke="#c8b8e8" fill="none"/></svg></div></div>

<!-- Track 15 -->
<div class="c en" style="--t:15;--a:28.6;--b:32.7"><div class="h at">En..it</div><div class="bd"><svg viewBox="0 0 100 55" preserveAspectRatio="none"><path d="M0 54Q80 50 100 3" stroke="#e8e8f0" fill="none"/></svg></div></div>
<div class="c en" style="--t:15;--a:40.6;--b:44.6"><div class="h at">En..2</div><div class="bd"><svg viewBox="0 0 100 55" preserveAspectRatio="none"><path d="M0 54H100" stroke="#c8b8e8" fill="none"/></svg></div></div>
<div class="c en" style="--t:15;--a:52.6;--b:56.6"><div class="h at">En..3</div><div class="bd"><svg viewBox="0 0 100 55" preserveAspectRatio="none"><path d="M0 54Q80 50 100 3" stroke="#c8b8e8" fill="none"/></svg></div></div>
<div class="c en" style="--t:15;--a:56.6;--b:60.5"><div class="h at">En..2</div><div class="bd"><svg viewBox="0 0 100 55" preserveAspectRatio="none"><path d="M0 54H100" stroke="#c8b8e8" fill="none"/></svg></div></div>

</body></html>
